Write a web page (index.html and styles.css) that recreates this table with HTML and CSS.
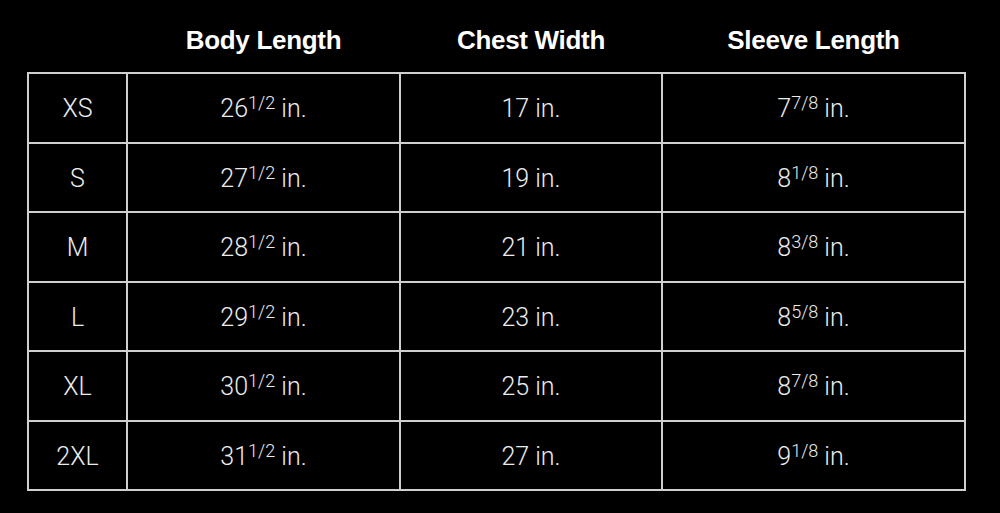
FILE: index.html
```html
<!DOCTYPE html>
<html>
<head>
<meta charset="utf-8">
<link rel="stylesheet" href="styles.css">
</head>
<body>
<table class="sizes">
  <thead>
    <tr class="head-row">
      <th class="c-size"></th>
      <th class="c-body">Body Length</th>
      <th class="c-chest">Chest Width</th>
      <th class="c-sleeve">Sleeve Length</th>
    </tr>
  </thead>
  <tbody>
    <tr><td>XS</td><td>26<sup>1/2</sup> in.</td><td>17 in.</td><td>7<sup>7/8</sup> in.</td></tr>
    <tr><td>S</td><td>27<sup>1/2</sup> in.</td><td>19 in.</td><td>8<sup>1/8</sup> in.</td></tr>
    <tr><td>M</td><td>28<sup>1/2</sup> in.</td><td>21 in.</td><td>8<sup>3/8</sup> in.</td></tr>
    <tr><td>L</td><td>29<sup>1/2</sup> in.</td><td>23 in.</td><td>8<sup>5/8</sup> in.</td></tr>
    <tr><td>XL</td><td>30<sup>1/2</sup> in.</td><td>25 in.</td><td>8<sup>7/8</sup> in.</td></tr>
    <tr><td>2XL</td><td>31<sup>1/2</sup> in.</td><td>27 in.</td><td>9<sup>1/8</sup> in.</td></tr>
  </tbody>
</table>
</body>
</html>
```
FILE: styles.css
```css
html, body {
  margin: 0;
  padding: 0;
  background: #000;
}
body {
  width: 1000px;
  height: 513px;
  overflow: hidden;
  font-family: Roboto, "Liberation Sans", sans-serif;
  color: #ececec;
}
.sizes {
  border-collapse: collapse;
  margin-left: 27px;
  table-layout: fixed;
}
.head-row {
  height: 73px;
}
.sizes th {
  padding: 8px 0 0 0;
  font-family: "Liberation Sans", Arial, sans-serif;
  font-weight: 700;
  font-size: 26px;
  line-height: 26px;
  color: #fff;
  text-align: center;
  vertical-align: middle;
  letter-spacing: -0.3px;
}
.c-size { width: 99px; }
.c-body { width: 273px; }
.c-chest { width: 262px; }
.c-sleeve { width: 303px; }
.sizes td {
  border: 2px solid #cfcfcf;
  height: 65.5px;
  padding: 2px 0 0 0;
  text-align: center;
  vertical-align: middle;
  font-weight: 300;
  font-size: 25px;
}
.sizes sup {
  font-size: 18px;
  line-height: 0;
  vertical-align: 8px;
}
```
